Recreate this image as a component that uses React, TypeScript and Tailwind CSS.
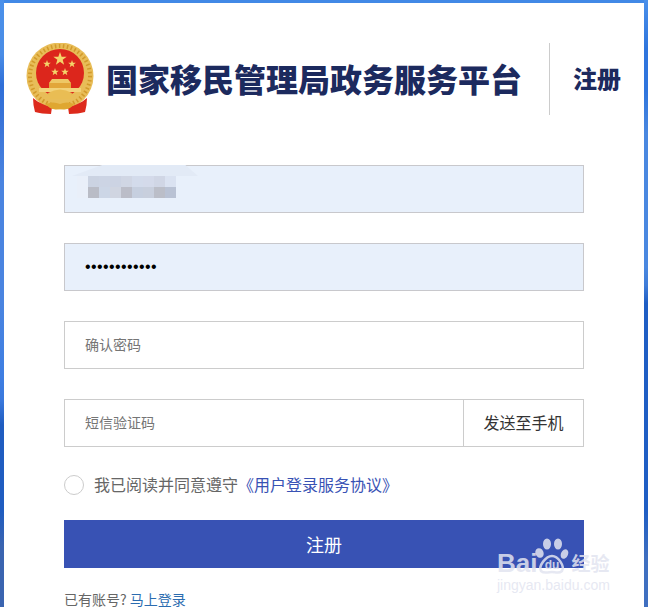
const cjk = "font-['Microsoft_YaHei','Noto_Sans_CJK_SC',sans-serif]";

const Star = ({ x, y, r }: { x: number; y: number; r: number }) => {
  const pts = [];
  for (let i = 0; i < 10; i++) {
    const rad = i % 2 === 0 ? r : r * 0.4;
    const a = (Math.PI / 5) * i - Math.PI / 2;
    pts.push(`${x + rad * Math.cos(a)},${y + rad * Math.sin(a)}`);
  }
  return <polygon points={pts.join(" ")} fill="#f4d56a" />;
};

const Emblem = () => (
  <svg width="68" height="72" viewBox="0 0 68 72" className="shrink-0">
    <circle cx="34" cy="33" r="33.5" fill="#e8bd58" />
    <circle cx="34" cy="33" r="30" fill="none" stroke="#d29a2a" strokeWidth="4" strokeDasharray="1.5 2.5" />
    <circle cx="34" cy="30" r="24" fill="#dc261c" />
    <Star x={34} y={16} r={7} />
    <Star x={21} y={21} r={4} />
    <Star x={46} y={21} r={4} />
    <Star x={29} y={29} r={4} />
    <Star x={39} y={29} r={4} />
    <path d="M26 36 H42 L45 40 H23 Z" fill="#eec766" />
    <rect x="23" y="40" width="22" height="5" fill="#e2a63a" />
    <rect x="13" y="45" width="42" height="4" fill="#f2d27a" />
    <path d="M7 55 C13 60 20 63 26 64 L25 71 C19 71 13 70 9 69 Q7 62 7 55 Z" fill="#dd2a1c" />
    <path d="M61 55 C55 60 48 63 42 64 L43 71 C49 71 55 70 59 69 Q61 62 61 55 Z" fill="#dd2a1c" />
    <path d="M22 50 Q34 43 46 50 L44 56 H24 Z" fill="#e9bd54" />
    <path d="M20 61 Q27 58 34 61 Q41 58 48 61 Q44 68 34 66 Q24 68 20 61 Z" fill="#dfa731" />
  </svg>
);

const Mosaic = () => {
  const top = ["#cbd3e2", "#ccd4e4", "#ccd3e3", "#d0d6e4", "#d3dbeb", "#d4daea", "#d0d6e5", "#dae2f1"];
  const bottom = ["#b9bcc6", "#ccd6e6", "#d0d5e1", "#bbbdc8", "#c6cfdf", "#c8cfdd", "#bbbec8", "#b9c2d4"];
  return (
    <>
      <div className="absolute left-[7px] top-[-1px] h-[11px] w-[126px] bg-[#e2eaf6] [clip-path:polygon(24%_0,90%_0,100%_100%,0_100%)]" />
      <div className="absolute left-[12px] top-[10px] h-[22px] w-[11px] bg-[#e9eff9]" />
      <div className="absolute left-[23px] top-[10px]">
        <div className="flex">
          {top.map((c, i) => (
            <div key={i} className="h-[11px] w-[11px]" style={{ background: c }} />
          ))}
        </div>
        <div className="flex">
          {bottom.map((c, i) => (
            <div key={i} className="h-[11px] w-[11px]" style={{ background: c }} />
          ))}
        </div>
      </div>
    </>
  );
};

const Watermark = () => (
  <div className="pointer-events-none absolute left-[497px] top-[538px] w-[118px] text-[rgba(226,228,240,0.85)]">
    <div className="flex items-end font-['Liberation_Sans',sans-serif] text-[26px] font-bold leading-[24px]">
      <span>Bai</span>
      <svg width="34" height="37" viewBox="0 0 34 37" className="ml-[-2px] shrink-0">
        <g fill="rgba(226,228,240,0.85)">
          <ellipse cx="12" cy="6" rx="4" ry="5.5" />
          <ellipse cx="23" cy="6" rx="4" ry="5.5" />
          <ellipse cx="4.5" cy="15" rx="4" ry="5" transform="rotate(-25 4.5 15)" />
          <ellipse cx="29.5" cy="16" rx="3.5" ry="5" transform="rotate(25 29.5 16)" />
        </g>
        <path
          d="M17 18 C23 18 30 28 27 33 C24 36 20 34 17 34 C14 34 9 36 6 33 C3 28 11 18 17 18 Z"
          fill="none"
          stroke="rgba(226,228,240,0.85)"
          strokeWidth="2.5"
        />
        <text x="17" y="31" textAnchor="middle" fontSize="12" fontWeight="700" fill="rgba(226,228,240,0.85)">
          du
        </text>
      </svg>
      <span className={`${cjk} ml-[2px] whitespace-nowrap text-[19px] leading-[24px]`}>经验</span>
    </div>
    <div className="mt-[4px] whitespace-nowrap font-['Liberation_Sans',sans-serif] text-[14px] leading-[12px]">
      jingyan.baidu.com
    </div>
  </div>
);

export default function App() {
  return (
    <div className={`${cjk} relative flex h-[607px] w-[648px] overflow-hidden`}>
      <div className="h-full w-[4px] bg-[linear-gradient(to_bottom,#4a90ea_0%,#4a8de6_9%,#2f6fd8_14%,#3a74d8_20%,#4a84e0_30%,#4a84e0_50%,#3e7ee2_62%,#3a78dc_66%,#1f5cc0_70%,#1f5cc0_84%,#3a64b0_90%,#3a64b0_100%)]" />
      <div className="flex h-full w-[640px] flex-col">
        <div className="h-[3px] bg-[#4189e6]" />
        <div className="flex-1 bg-white">
          <div className="flex h-[112px] items-end pl-[22px]">
            <Emblem />
            <h1 className="mb-[13px] ml-[12px] w-[416px] whitespace-nowrap text-[32px] font-black leading-[48px] text-[#1c2a5e]">
              国家移民管理局政务服务平台
            </h1>
            <div className="ml-[27px] h-[72px] w-px bg-[#cccccc]" />
            <div className="mb-[20px] ml-[23px] whitespace-nowrap text-[24px] font-black leading-[34px] text-[#1c2a5e]">注册</div>
          </div>

          <div className="ml-[60px] mt-[50px] flex w-[520px] flex-col">
            <div className="relative h-[48px] border border-[#c8c8cc] bg-[#e8f0fb]">
              <Mosaic />
            </div>
            <input
              type="password"
              readOnly
              defaultValue="abcdefghijkl"
              className="mt-[30px] h-[48px] border border-[#c8c8cc] bg-[#e8f0fb] pl-[20px] font-['Liberation_Sans',sans-serif] text-[16px] tracking-[0.4px] text-black outline-none"
            />
            <input
              readOnly
              placeholder="确认密码"
              className="mt-[30px] h-[48px] border border-[#cccccc] bg-white pb-[2px] pl-[20px] text-[14px] outline-none placeholder:text-[#757575]"
            />
            <div className="mt-[30px] flex h-[48px] border border-[#cccccc]">
              <input
                readOnly
                placeholder="短信验证码"
                className="min-w-0 flex-1 bg-white pb-[2px] pl-[20px] text-[14px] outline-none placeholder:text-[#757575]"
              />
              <div className="flex w-[120px] items-center justify-center border-l border-[#cccccc] pb-[2px] text-[16px] text-[#333333]">
                发送至手机
              </div>
            </div>

            <div className="mt-[28px] flex h-[20px] items-center">
              <span className="h-[20px] w-[20px] rounded-full border border-[#cccccc]" />
              <span className="ml-[10px] mt-[-2px] whitespace-nowrap text-[16px] leading-[20px] text-[#666666]">
                我已阅读并同意遵守<span className="text-[#3852b4]">《用户登录服务协议》</span>
              </span>
            </div>

            <button type="button" className="mt-[25px] h-[48px] w-full bg-[#3852b4] text-[18px] text-white">
              注册
            </button>

            <p className="mt-[23px] whitespace-nowrap text-[14px] leading-[16px] text-[#666666]">
              已有账号? <a className="text-[#2b6cb0]">马上登录</a>
            </p>
          </div>
        </div>
      </div>
      <div className="h-full w-[4px] bg-[linear-gradient(to_bottom,#4a90ea_0%,#2f75dd_8%,#2f75dd_15%,#4a88e0_22%,#4a88e0_44%,#3f7cd8_47%,#1f5ec4_50%,#1f5ec4_84%,#3f6fc0_92%,#3f6fc0_100%)]" />
      <Watermark />
    </div>
  );
}
